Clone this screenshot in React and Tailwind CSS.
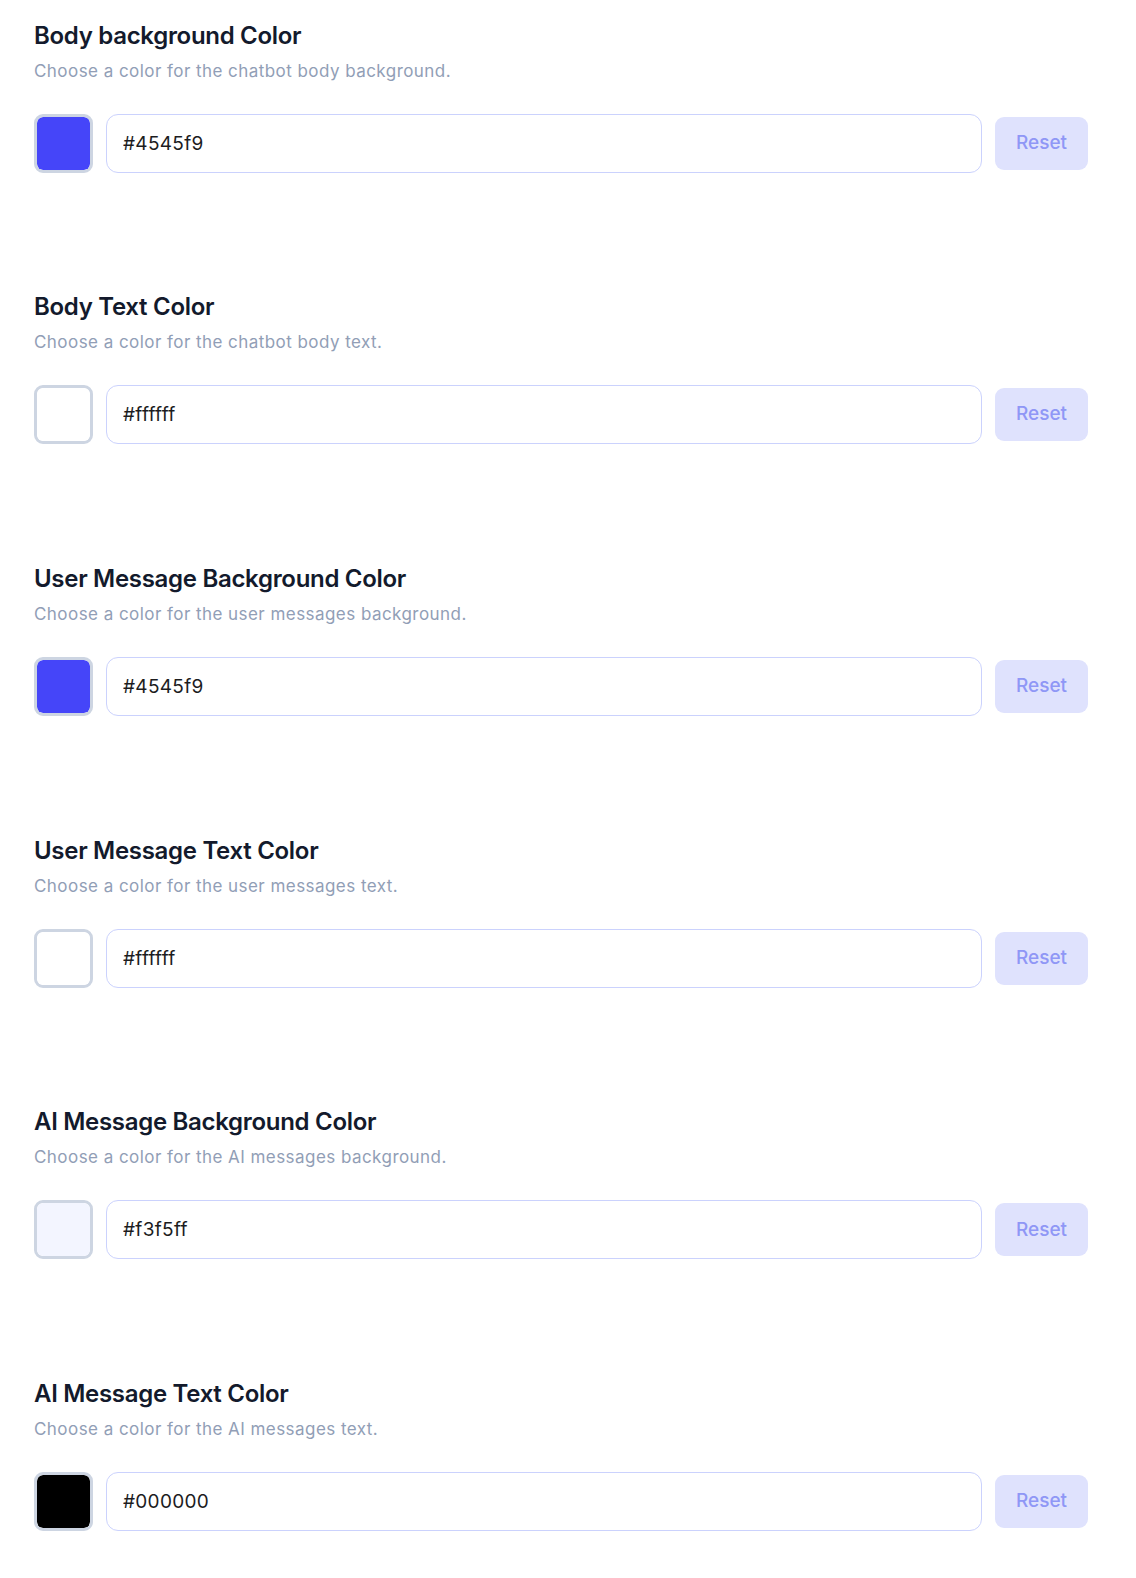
import React, { useState } from 'react';

const fields = [
  { title: 'Body background Color', desc: 'Choose a color for the chatbot body background.', value: '#4545f9' },
  { title: 'Body Text Color', desc: 'Choose a color for the chatbot body text.', value: '#ffffff' },
  { title: 'User Message Background Color', desc: 'Choose a color for the user messages background.', value: '#4545f9' },
  { title: 'User Message Text Color', desc: 'Choose a color for the user messages text.', value: '#ffffff' },
  { title: 'AI Message Background Color', desc: 'Choose a color for the AI messages background.', value: '#f3f5ff' },
  { title: 'AI Message Text Color', desc: 'Choose a color for the AI messages text.', value: '#000000' },
];

const ColorField = ({ title, desc, initial }) => {
  const [value, setValue] = useState(initial);

  return (
    <div className="h-[271.7px]">
      <h3 className="text-[24px] leading-[32px] font-semibold text-[#131a2c] tracking-[-0.3px]">{title}</h3>
      <p className="mt-[7px] text-[17px] leading-[24px] text-[#919eb6] tracking-[0.45px]">{desc}</p>
      <div className="mt-[31px] flex items-center gap-[13px]">
        <div className="w-[59px] h-[59px] shrink-0 rounded-[9px] border-[3px] border-[#cdd5e2] overflow-hidden">
          <div className="w-full h-full rounded-[6px]" style={{ backgroundColor: value }} />
        </div>
        <input
          type="text"
          value={value}
          onChange={e => setValue(e.target.value)}
          className="flex-1 h-[59px] rounded-[12px] border border-[#cbd2fd] bg-white pl-[16px] text-[19px] tracking-[0.3px] text-[#1c1c1e] outline-none"
        />
        <button
          type="button"
          onClick={() => setValue(initial)}
          className="w-[93px] h-[53px] shrink-0 rounded-[9px] bg-[#dfe2fd] text-[19px] font-medium text-[#8f97f6]"
        >
          Reset
        </button>
      </div>
    </div>
  );
};

export default function App() {
  return (
    <div className="min-h-screen bg-white pt-[19.5px] pl-[34px] pr-[48px] font-['Inter',sans-serif]">
      {fields.map(f => (
        <ColorField key={f.title} title={f.title} desc={f.desc} initial={f.value} />
      ))}
    </div>
  );
}
